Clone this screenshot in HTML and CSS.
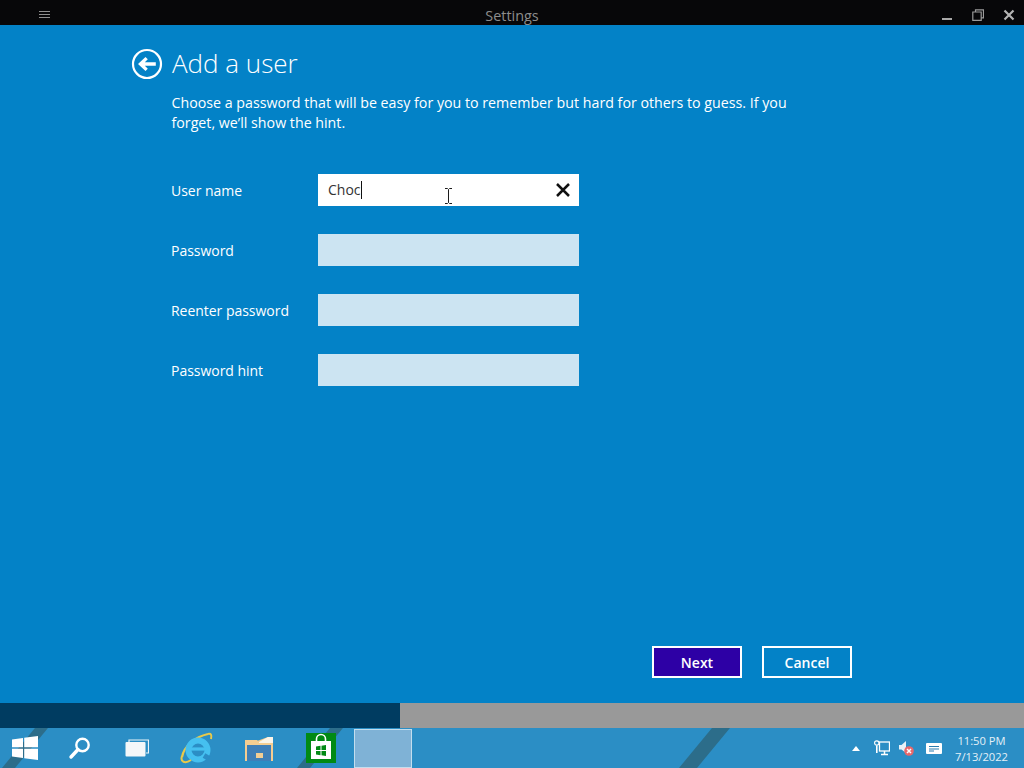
FILE: index.html
```html
<!DOCTYPE html>
<html lang="en">
<head>
<meta charset="utf-8">
<title>Settings</title>
<link rel="stylesheet" href="styles.css">
</head>
<body>
<div class="screen">
  <header class="titlebar">
    <svg class="hamburger" width="12" height="10" viewBox="0 0 12 10"><path d="M0 1.500h11M0 4.500h11M0 7.500h11" stroke="#8f8f8f" stroke-width="1"/></svg>
    <div class="title">Settings</div>
    <div class="winctl">
      <svg width="12" height="12" viewBox="0 0 12 12"><path d="M1 10h10" stroke="#a8a8a8" stroke-width="2"/></svg>
      <svg width="12" height="12" viewBox="0 0 12 12"><path d="M3.500 2.500V.8h8v8H9.500M.8 3h8.400v8.300H.8z" fill="none" stroke="#9a9a9a" stroke-width="1.200"/></svg>
      <svg width="12" height="12" viewBox="0 0 12 12"><path d="M1.500 1.500l9 9M10.500 1.500l-9 9" stroke="#b4b4b4" stroke-width="2.200"/></svg>
    </div>
  </header>
  <main class="content">
    <div class="heading">
      <svg class="back" width="32" height="32" viewBox="0 0 32 32"><circle cx="16" cy="16" r="14" fill="none" stroke="#fff" stroke-width="2.200"/><path d="M7 16l7.500-7 2.300 2.300-3 3h11v3.400h-11l3 3-2.300 2.300z" fill="#fff"/></svg>
      <h1>Add a user</h1>
    </div>
    <p class="intro">Choose a password that will be easy for you to remember but hard for others to guess. If you forget, we’ll show the hint.</p>
    <form class="fields">
      <div class="label">User name</div>
      <div class="box active"><span class="typed">Choc</span><span class="caret"></span>
        <svg class="clear" width="14" height="14" viewBox="0 0 14 14"><path d="M1 1l12 12M13 1L1 13" stroke="#111" stroke-width="2.500"/></svg>
        <svg class="ibeam" width="9" height="16" viewBox="0 0 9 16"><path d="M1 .5h2.500l1 1 1-1H8M4.500 1.500v13M1 15.500h2.500l1-1 1 1H8" fill="none" stroke="#1c1c1c" stroke-width="1"/></svg>
      </div>
      <div class="label">Password</div>
      <div class="box"></div>
      <div class="label">Reenter password</div>
      <div class="box"></div>
      <div class="label">Password hint</div>
      <div class="box"></div>
    </form>
    <div class="actions">
      <div class="btn primary">Next</div>
      <div class="btn">Cancel</div>
    </div>
  </main>
  <div class="progress"><div class="progress-fill"></div></div>
  <footer class="taskbar">
    <div class="stripe s1"></div>
    <div class="stripe s2"></div>
    <div class="stripe s3"></div>
    <div class="task-icons">
      <div class="ti start"><svg width="28" height="26" viewBox="0 0 28 26"><path d="M1 4.500l11-1.500v9.300H1zM13.200 2.800L27 1v11.300H13.200zM1 13.700h11V23L1 21.500zM13.200 13.700H27V25l-13.800-1.800z" fill="#fff"/></svg></div>
      <div class="ti search"><svg width="24" height="24" viewBox="0 0 24 24"><circle cx="14.500" cy="9" r="6.200" fill="none" stroke="#fff" stroke-width="2.400"/><path d="M10 13.500L3 21" stroke="#fff" stroke-width="3.400" stroke-linecap="round"/></svg></div>
      <div class="ti views"><svg width="24" height="18" viewBox="0 0 24 18"><path d="M4 3V1h19.500v13H21" fill="none" stroke="#eaf3f8" stroke-width="1.200"/><rect x=".5" y="3" width="20" height="14.500" rx="1" fill="#f4f7f9"/></svg></div>
      <div class="ti ie"><svg width="34" height="34" viewBox="0 0 34 34"><path d="M3 26C5 15 16 6 29 3" fill="none" stroke="#e8c94a" stroke-width="2.200"/><path d="M29 3c3-1 4 1 3 5" fill="none" stroke="#e8c94a" stroke-width="2"/><circle cx="19" cy="19" r="9.500" fill="none" stroke="#45c0f0" stroke-width="6"/><path d="M11 18h17" stroke="#45c0f0" stroke-width="3.200"/><path d="M25 24.500l5 3" stroke="#2b8dc6" stroke-width="5"/><path d="M3 25c-2 6 3 8 9 4" fill="none" stroke="#e8c94a" stroke-width="2"/></svg></div>
      <div class="ti files"><svg width="30" height="26" viewBox="0 0 30 26"><path d="M1 5h12l2 2v19H1z" fill="#f5cd91"/><path d="M13 6l11-4h5v24H1V9h12z" fill="#f5cd91"/><path d="M15 7l9-5h5v6H15z" fill="#fbf4e8"/><path d="M3 10h24v16H3z" fill="#3f7fb8"/><rect x="12" y="18" width="7" height="5" fill="#f3cd94"/></svg></div>
      <div class="ti store"><svg width="30" height="30" viewBox="0 0 30 30"><rect width="30" height="30" fill="#018a14"/><path d="M10.500 8V6a4.500 4.500 0 0 1 9 0v2" fill="none" stroke="#fff" stroke-width="1.600"/><path d="M5 8h20v18H5z" fill="#fff"/><path d="M10 13.500l4.500-.7v4.200H10zM15.500 12.700l4.500-.7v5h-4.500zM10 18h4.500v4.200L10 21.500zM15.500 18H20v5l-4.500-.7z" fill="#018a14"/></svg></div>
      <div class="ti running"></div>
    </div>
    <div class="tray">
      <svg class="tray-up" width="8" height="5" viewBox="0 0 8 5"><path d="M0 5l4-5 4 5z" fill="#fff"/></svg>
      <svg class="tray-ic" width="16" height="16" viewBox="0 0 16 16"><rect x="5.500" y="2" width="10" height="9" fill="none" stroke="#fff" stroke-width="1.300"/><path d="M10.500 11v3M7 14.500h7" stroke="#fff" stroke-width="1.500"/><circle cx="2.800" cy="3" r="2.200" fill="#2a8cc4" stroke="#fff" stroke-width="1.200"/><path d="M2.800 5.500V13" stroke="#fff" stroke-width="1.600"/></svg>
      <svg class="tray-ic" width="16" height="16" viewBox="0 0 16 16"><path d="M1 5h2.500L8 1v12L3.500 9.500H1z" fill="#e8f2f8"/><circle cx="11" cy="11" r="4.800" fill="#e8686b"/><path d="M9 9l4 4M13 9l-4 4" stroke="#fff" stroke-width="1.500"/></svg>
      <svg class="tray-msg" width="16" height="11" viewBox="0 0 16 11"><rect width="16" height="11" rx="1" fill="#fff"/><path d="M3 3.500h10M3 6h10M3 8h5" stroke="#2a7db0" stroke-width="1"/></svg>
      <div class="clock"><div>11:50 PM</div><div>7/13/2022</div></div>
    </div>
  </footer>
</div>
</body>
</html>
```
FILE: styles.css
```css
* { box-sizing: border-box; }
html, body { margin: 0; padding: 0; }
body { font-family: "Open Sans", "Noto Sans", sans-serif; }
.screen { width: 1024px; height: 768px; display: flex; flex-direction: column; overflow: hidden; background: #0382c7; }

.titlebar { height: 25px; flex: none; background: #070709; display: flex; align-items: center; position: relative; padding-left: 39px; }
.hamburger { margin-top: 4px; }
.title { position: absolute; left: 0; right: 0; top: 5px; text-align: center; color: #8d8d8d; font-size: 14.4px; line-height: 22px; }
.winctl { margin-left: auto; display: flex; gap: 19px; padding-right: 9px; margin-top: 4px; }

.content { flex: 1; position: relative; padding: 23px 0 0 131px; color: #fff; }
.heading { display: flex; align-items: center; gap: 9px; height: 32px; }
.heading h1 { margin: -2px 0 0; font-weight: 300; font-size: 26px; line-height: 32px; }
.intro { margin: 13px 0 0 40.5px; width: 640px; font-size: 14.23px; line-height: 20px; }
.fields { margin: 41px 0 0 40px; display: grid; grid-template-columns: 147px 261px; grid-auto-rows: 32px; row-gap: 28px; align-items: center; }
.label { font-size: 14px; line-height: 20px; padding-top: 2px; letter-spacing: -0.03px; }
.box { height: 32px; background: #cce4f2; position: relative; display: flex; align-items: center; padding-left: 10px; }
.box.active { background: #fff; }
.typed { color: #333; font-size: 14px; line-height: 20px; }
.caret { width: 1px; height: 18px; background: #111; }
.clear { position: absolute; right: 9px; top: 9px; }
.ibeam { position: absolute; left: 126px; top: 14px; }

.actions { position: absolute; left: 652px; top: 621px; display: flex; gap: 20px; }
.btn { width: 90px; height: 32px; border: 2px solid #fff; font-size: 14px; font-weight: 600; line-height: 29px; text-align: center; }
.btn.primary { background: #2d00a5; }

.progress { height: 25px; flex: none; background: #999; }
.progress-fill { width: 400px; height: 100%; background: #003c61; }

.taskbar { height: 40px; flex: none; background: #2b8ec5; position: relative; display: flex; justify-content: space-between; overflow: hidden; }
.stripe { position: absolute; top: -2px; height: 50px; background: #2c6d8a; transform: skewX(-39.5deg); }
.s1 { left: 16px; width: 13px; }
.s2 { left: 311px; width: 13px; }
.s3 { left: 693px; width: 18px; }
.task-icons { display: flex; position: relative; height: 40px; }
.ti { height: 40px; display: flex; align-items: center; justify-content: center; }
.start { width: 50px; }
.search { width: 60px; }
.views { width: 54px; }
.ie { width: 64px; }
.files { width: 61px; }
.store { width: 64px; }
.running { width: 58px; height: 39px; margin: 1px 0 0 1px; background: #7fb2d6; border: 1px solid #c3deee; }
.tray { display: flex; align-items: center; position: relative; color: #e4f0f7; font-size: 11.2px; padding-right: 16px; }
.tray-up { margin-right: 14px; }
.tray-ic { margin-right: 8px; }
.tray-msg { margin: 0 13px 0 4px; }
.clock { text-align: center; line-height: 16px; margin-top: 1px; }
```
